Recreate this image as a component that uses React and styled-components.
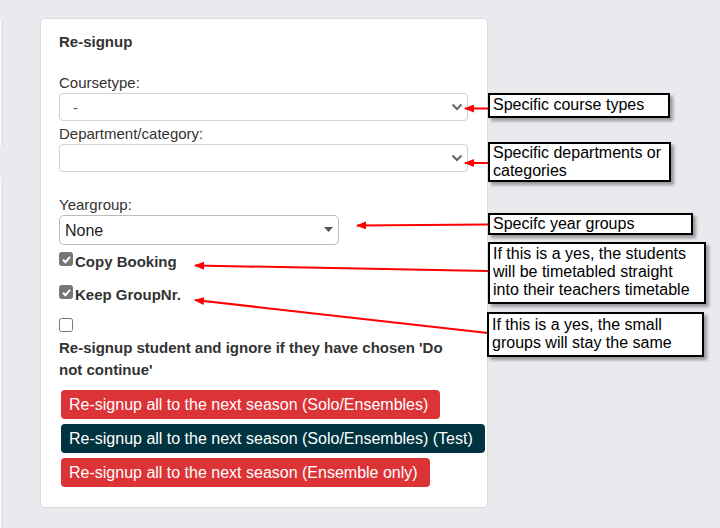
import React from "react";
import styled, { createGlobalStyle } from "styled-components";

const GlobalStyle = createGlobalStyle`
  html, body {
    margin: 0;
    padding: 0;
    background: #e9eaee;
  }
  body {
    font-family: "Liberation Sans", Arial, sans-serif;
    color: #333;
  }
`;

const arrows = [
  { x1: 488, y1: 108.5, x2: 465, y2: 108.5 },
  { x1: 488, y1: 163, x2: 465, y2: 163 },
  { x1: 488, y1: 224.5, x2: 357, y2: 225.5 },
  { x1: 488, y1: 271, x2: 195, y2: 265.5 },
  { x1: 488, y1: 333, x2: 195, y2: 300 },
];

const notes = [
  { left: 488, top: 93, width: 182, height: 25, pad: 1, lines: ["Specific course types"] },
  { left: 488, top: 142, width: 183, height: 40, pad: 0, lines: ["Specific departments or", "categories"] },
  { left: 488, top: 213, width: 205, height: 22, pad: 0, lines: ["Specifc year groups"] },
  {
    left: 488,
    top: 242,
    width: 218,
    height: 62,
    pad: 1,
    lines: ["If this is a yes, the students", "will be timetabled straight", "into their teachers timetable"],
  },
  { left: 487, top: 312, width: 217, height: 45, pad: 2, lines: ["If this is a yes, the small", "groups will stay the same"] },
];

const CheckBox = ({ checked }) => (
  <Box $checked={checked}>
    {checked && (
      <svg width="11" height="11" viewBox="0 0 11 11">
        <path d="M2 5.8 L4.4 8.2 L9 2.8" />
      </svg>
    )}
  </Box>
);

const App = () => {
  return (
    <>
      <GlobalStyle />
      <Page>
        <Side>
          <Stub $height={126} />
          <Stub $height={360} />
        </Side>
        <Card>
          <Title>Re-signup</Title>
          <Label $gap={21}>Coursetype:</Label>
          <SelectWrap>
            <Select defaultValue="-">
              <option value="-">-</option>
            </Select>
            <Chevron width="12" height="8" viewBox="0 0 12 8">
              <path d="M1.5 1.5 L6 6 L10.5 1.5" />
            </Chevron>
          </SelectWrap>
          <Label $gap={3}>Department/category:</Label>
          <SelectWrap>
            <Select defaultValue="">
              <option value=""></option>
            </Select>
            <Chevron width="12" height="8" viewBox="0 0 12 8">
              <path d="M1.5 1.5 L6 6 L10.5 1.5" />
            </Chevron>
          </SelectWrap>
          <Label $gap={23}>Yeargroup:</Label>
          <SmallSelectWrap>
            <YearSelect defaultValue="none">
              <option value="none">None</option>
            </YearSelect>
            <Caret width="9" height="5" viewBox="0 0 9 5">
              <polygon points="0,0 9,0 4.5,5" />
            </Caret>
          </SmallSelectWrap>
          <CheckRow $gap={7}>
            <CheckBox checked />
            Copy Booking
          </CheckRow>
          <CheckRow $gap={13}>
            <CheckBox checked />
            Keep GroupNr.
          </CheckRow>
          <CheckRow $gap={13}>
            <CheckBox />
          </CheckRow>
          <Notice>Re-signup student and ignore if they have chosen 'Do not continue'</Notice>
          <Buttons>
            <Button $variant="red">Re-signup all to the next season (Solo/Ensembles)</Button>
            <Button $variant="dark">Re-signup all to the next season (Solo/Ensembles) (Test)</Button>
            <Button $variant="red">Re-signup all to the next season (Ensemble only)</Button>
          </Buttons>
        </Card>

        <Overlay width="720" height="528" viewBox="0 0 720 528">
          <defs>
            <marker
              id="head"
              markerWidth="10"
              markerHeight="8"
              refX="9"
              refY="4"
              orient="auto"
              markerUnits="userSpaceOnUse"
            >
              <path d="M0,0 L10,4 L0,8 z" fill="#ff0000" />
            </marker>
          </defs>
          {arrows.map((a, i) => (
            <line
              key={i}
              x1={a.x1}
              y1={a.y1}
              x2={a.x2}
              y2={a.y2}
              stroke="#ff0000"
              strokeWidth="2"
              markerEnd="url(#head)"
            />
          ))}
        </Overlay>
        {notes.map((n, i) => (
          <Note
            key={i}
            $left={n.left}
            $top={n.top}
            $width={n.width}
            $height={n.height}
            $pad={n.pad}
          >
            {n.lines.map((l, j) => (
              <div key={j}>{l}</div>
            ))}
          </Note>
        ))}
      </Page>
    </>
  );
};

const Page = styled.div`
  position: relative;
  display: flex;
  align-items: flex-start;
  width: 720px;
  height: 528px;
  overflow: hidden;
  padding-top: 18px;
  box-sizing: border-box;
`;
const Side = styled.div`
  display: flex;
  flex-direction: column;
  gap: 31px;
  padding-top: 2px;
  margin-right: 37px;
`;
const Stub = styled.div`
  width: 2px;
  height: ${(p) => p.$height}px;
  background: #f4f5f7;
  border-right: 1px solid #d9d9dc;
`;
const Card = styled.div`
  width: 448px;
  height: 490px;
  box-sizing: border-box;
  background: #fff;
  border: 1px solid #dcdcdc;
  border-radius: 4px;
  padding: 13px 19px 0 18px;
`;
const Title = styled.div`
  font-size: 15px;
  line-height: 20px;
  font-weight: bold;
  color: #333;
`;
const Label = styled.div`
  margin-top: ${(p) => p.$gap}px;
  font-size: 15px;
  line-height: 20px;
  color: #333;
`;
const SelectWrap = styled.div`
  position: relative;
  width: 100%;
  height: 28px;
`;
const SmallSelectWrap = styled.div`
  position: relative;
  width: 280px;
  height: 30px;
`;
const Select = styled.select`
  appearance: none;
  width: 100%;
  height: 100%;
  box-sizing: border-box;
  border: 1px solid #d2d2d2;
  border-radius: 4px;
  background: #fff;
  padding: 0 0 0 13px;
  font-family: "Liberation Sans", Arial, sans-serif;
  font-size: 15px;
  color: #555;
  outline: none;
`;
const YearSelect = styled(Select)`
  border-color: #bdbdbd;
  border-radius: 5px;
  padding-left: 5px;
  font-size: 16px;
  color: #222;
`;
const Chevron = styled.svg`
  position: absolute;
  right: 5px;
  top: 10px;
  fill: none;
  stroke: #666;
  stroke-width: 2;
  pointer-events: none;
`;
const Caret = styled.svg`
  position: absolute;
  right: 6px;
  top: 12px;
  fill: #555;
  pointer-events: none;
`;
const CheckRow = styled.label`
  display: flex;
  align-items: flex-start;
  height: 20px;
  margin-top: ${(p) => p.$gap}px;
  font-size: 15px;
  line-height: 20px;
  font-weight: bold;
  color: #333;
`;
const Box = styled.span`
  display: flex;
  align-items: center;
  justify-content: center;
  flex: none;
  width: 14px;
  height: 14px;
  margin-right: 2px;
  box-sizing: border-box;
  border-radius: 2.5px;
  border: 1px solid #767676;
  background: ${(p) => (p.$checked ? "#767676" : "#fff")};
  svg {
    fill: none;
    stroke: #fff;
    stroke-width: 2;
  }
`;
const Notice = styled.div`
  margin-top: -1px;
  max-width: 400px;
  font-size: 15px;
  line-height: 22px;
  font-weight: bold;
  color: #333;
`;
const Buttons = styled.div`
  display: flex;
  flex-direction: column;
  align-items: flex-start;
  gap: 5px;
  margin: 9px 0 0 2px;
`;
const Button = styled.button`
  border: 0;
  border-radius: 4px;
  padding: 5px 12px 5px 8px;
  font-family: "Liberation Sans", Arial, sans-serif;
  font-size: 16px;
  line-height: 19px;
  color: #fff;
  white-space: nowrap;
  background: ${(p) => (p.$variant === "dark" ? "#003340" : "#dc3337")};
  cursor: pointer;
`;
const Overlay = styled.svg`
  position: absolute;
  left: 0;
  top: 0;
  pointer-events: none;
`;
const Note = styled.div`
  position: absolute;
  left: ${(p) => p.$left}px;
  top: ${(p) => p.$top}px;
  width: ${(p) => p.$width}px;
  height: ${(p) => p.$height}px;
  box-sizing: border-box;
  padding: ${(p) => p.$pad}px 3px 0 3px;
  background: #fff;
  border: 2px solid #000;
  box-shadow: 3px 3px 3px rgba(0, 0, 0, 0.35);
  font-family: "Liberation Sans", Arial, sans-serif;
  font-size: 16px;
  line-height: 18px;
  color: #000;
  white-space: nowrap;
`;

export default App;
